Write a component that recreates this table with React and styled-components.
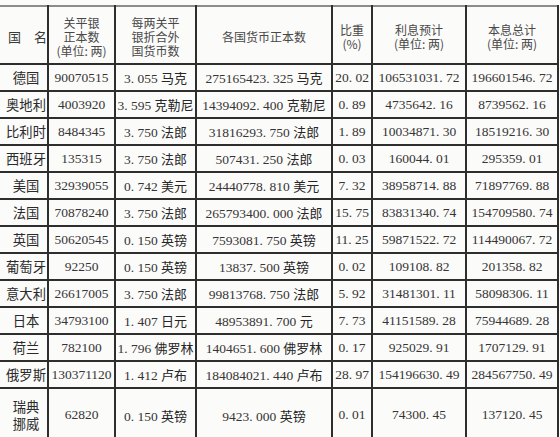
import React from 'react'
import styled, { createGlobalStyle } from 'styled-components'

const GlobalStyle = createGlobalStyle`
	html, body {
		margin: 0;
		background: #fbfbfa;
	}
`

const rows = [
	['德国', '90070515', '3. 055', '马克', '275165423. 325', '马克', '20. 02', '106531031. 72', '196601546. 72'],
	['奥地利', '4003920', '3. 595', '克勒尼', '14394092. 400', '克勒尼', '0. 89', '4735642. 16', '8739562. 16'],
	['比利时', '8484345', '3. 750', '法郎', '31816293. 750', '法郎', '1. 89', '10034871. 30', '18519216. 30'],
	['西班牙', '135315', '3. 750', '法郎', '507431. 250', '法郎', '0. 03', '160044. 01', '295359. 01'],
	['美国', '32939055', '0. 742', '美元', '24440778. 810', '美元', '7. 32', '38958714. 88', '71897769. 88'],
	['法国', '70878240', '3. 750', '法郎', '265793400. 000', '法郎', '15. 75', '83831340. 74', '154709580. 74'],
	['英国', '50620545', '0. 150', '英镑', '7593081. 750', '英镑', '11. 25', '59871522. 72', '114490067. 72'],
	['葡萄牙', '92250', '0. 150', '英镑', '13837. 500', '英镑', '0. 02', '109108. 82', '201358. 82'],
	['意大利', '26617005', '3. 750', '法郎', '99813768. 750', '法郎', '5. 92', '31481301. 11', '58098306. 11'],
	['日本', '34793100', '1. 407', '日元', '48953891. 700', '元', '7. 73', '41151589. 28', '75944689. 28'],
	['荷兰', '782100', '1. 796', '佛罗林', '1404651. 600', '佛罗林', '0. 17', '925029. 91', '1707129. 91'],
	['俄罗斯', '130371120', '1. 412', '卢布', '184084021. 440', '卢布', '28. 97', '154196630. 49', '284567750. 49'],
	['瑞典\n挪威', '62820', '0. 150', '英镑', '9423. 000', '英镑', '0. 01', '74300. 45', '137120. 45'],
]

const widths = [48, 67, 81, 136, 40, 94, 92]

function App() {
	return (
		<Page>
			<GlobalStyle />
			<Table>
				<colgroup>
					{widths.map((w, i) => (
						<Col key={i} $w={w} />
					))}
				</colgroup>
				<thead>
					<tr>
						<NameHead>国　名</NameHead>
						<Head>
							关平银
							<br />
							正本数
							<br />
							(单位: 两)
						</Head>
						<Head>
							每两关平
							<br />
							银折合外
							<br />
							国货币数
						</Head>
						<Head>各国货币正本数</Head>
						<Head>
							比重
							<br />
							(%)
						</Head>
						<Head>
							利息预计
							<br />
							(单位: 两)
						</Head>
						<Head>
							本息总计
							<br />
							(单位: 两)
						</Head>
					</tr>
				</thead>
				<tbody>
					{rows.map((r, i) => (
						<Row key={i} $tall={r[0].includes('\n')}>
							<Name>{r[0]}</Name>
							<Cell>{r[1]}</Cell>
							<Cell>
								{r[2]} <Unit>{r[3]}</Unit>
							</Cell>
							<Cell>
								{r[4]} <Unit>{r[5]}</Unit>
							</Cell>
							<Cell>{r[6]}</Cell>
							<Cell>{r[7]}</Cell>
							<Cell>{r[8]}</Cell>
						</Row>
					))}
				</tbody>
			</Table>
		</Page>
	)
}

const Page = styled.div`
	padding-top: 5px;
	height: 437px;
	overflow: hidden;
	box-sizing: border-box;
`
const Table = styled.table`
	border-collapse: collapse;
	table-layout: fixed;
	width: 558px;
	font-family: 'Liberation Serif', 'Noto Sans CJK SC', serif;
	font-size: 13.5px;
	color: #353535;
`
const Col = styled.col`
	width: ${(p) => p.$w}px;
`
const Head = styled.th`
	height: 53px;
	padding: 3px 0 0;
	border: 2px solid #2e2e2e;
	border-top: 2px solid #8c8c8c;
	font-family: 'Noto Sans CJK SC', sans-serif;
	font-weight: 400;
	font-size: 12px;
	line-height: 14px;
	color: #484848;
	text-align: center;
	vertical-align: middle;
	white-space: nowrap;
`
const NameHead = styled(Head)`
	border-left: none;
	text-align: left;
	padding-left: 8px;
	font-size: 13px;
	color: #3a3a3a;
`
const Row = styled.tr`
	height: ${(p) => (p.$tall ? 54 : 27)}px;
`
const Cell = styled.td`
	padding: 0;
	border: 2px solid #2e2e2e;
	text-align: center;
	vertical-align: middle;
	white-space: nowrap;
	overflow: hidden;
`
const Name = styled(Cell)`
	border-left: none;
	padding-left: 5px;
	font-family: 'Noto Sans CJK SC', sans-serif;
	font-size: 13.3px;
	line-height: 17px;
	color: #2a2a2a;
	white-space: pre-line;
`
const Unit = styled.span`
	font-family: 'Noto Sans CJK SC', sans-serif;
	font-size: 13px;
	color: #262626;
`

export default App
